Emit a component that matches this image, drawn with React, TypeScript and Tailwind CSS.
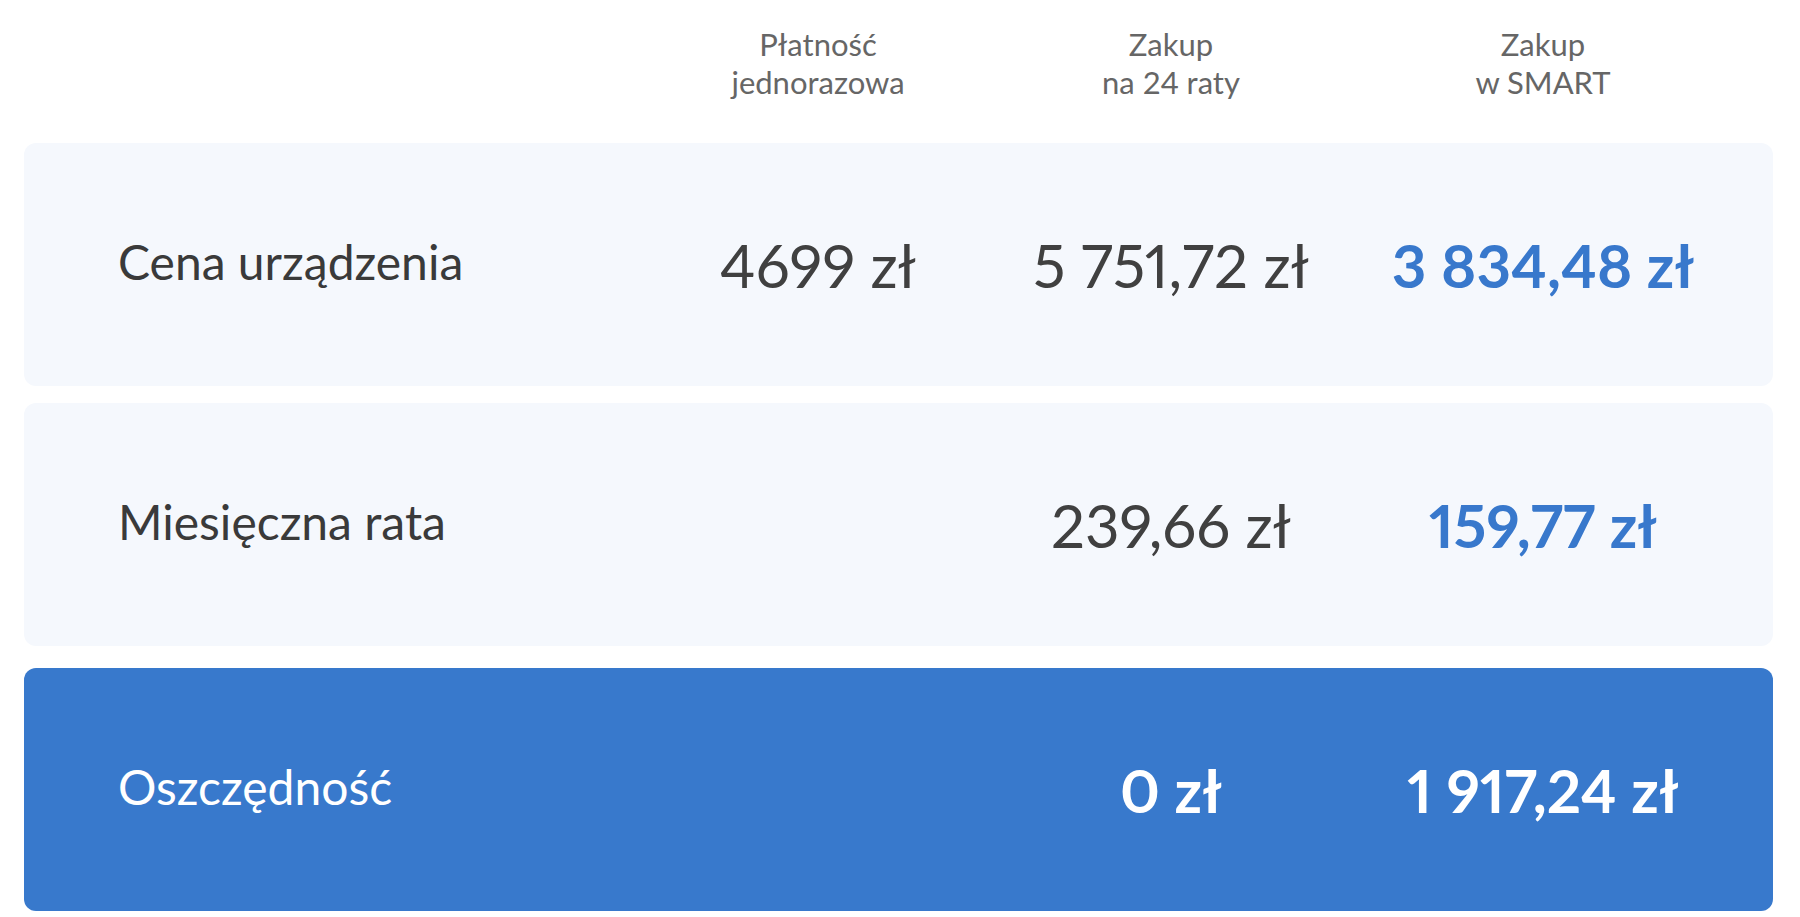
import React from "react";

const grid = "grid grid-cols-[522px_356px_350px_394px] items-center";

function Row({
  label,
  values,
  variant,
}: {
  label: string;
  values: string[];
  variant: "light" | "blue";
}) {
  const isBlue = variant === "blue";
  return (
    <div
      className={
        "h-[243px] rounded-[12px] pl-[94px] " +
        (isBlue ? "bg-[#3879cc]" : "bg-[#f5f8fd]") +
        " " +
        grid
      }
    >
      <div
        className={
          "pb-[6px] text-[48px] " + (isBlue ? "text-white" : "text-[#3a3a3a]")
        }
      >
        {label}
      </div>
      {values.map((v, i) => {
        let cls = "text-center text-[60px] leading-none proportional-nums ";
        if (isBlue) cls += "font-bold text-white";
        else if (i === 2) cls += "font-bold text-[#3878cc]";
        else cls += "text-[#404040]";
        return (
          <div key={i} className={cls}>
            {v}
          </div>
        );
      })}
    </div>
  );
}

export default function App() {
  return (
    <div
      className="min-h-[917px] w-[1800px] bg-white pl-[24px] pr-[27px]"
      style={{ fontFamily: "Lato, 'Noto Sans', sans-serif" }}
    >
      <div className={grid + " pl-[94px] pt-[25px] pb-[42px] text-[31px] leading-[38px] text-[#666666]"}>
        <div />
        <div className="text-center">
          Płatność
          <br />
          jednorazowa
        </div>
        <div className="text-center">
          Zakup
          <br />
          na 24 raty
        </div>
        <div className="text-center">
          Zakup
          <br />
          w SMART
        </div>
      </div>
      <div className="flex flex-col">
        <Row
          label="Cena urządzenia"
          values={["4699 zł", "5 751,72 zł", "3 834,48 zł"]}
          variant="light"
        />
        <div className="h-[17px]" />
        <Row
          label="Miesięczna rata"
          values={["", "239,66 zł", "159,77 zł"]}
          variant="light"
        />
        <div className="h-[22px]" />
        <Row
          label="Oszczędność"
          values={["", "0 zł", "1 917,24 zł"]}
          variant="blue"
        />
      </div>
    </div>
  );
}
